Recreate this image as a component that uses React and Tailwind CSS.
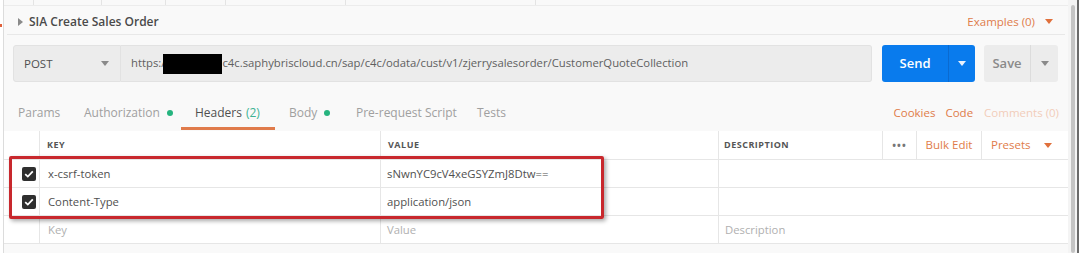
import React from 'react';

const Caret = ({ className = '' }) => (
  <svg width="8" height="5" viewBox="0 0 8 5" className={className}>
    <path d="M0 0 L8 0 L4 5 Z" fill="currentColor" />
  </svg>
);

const Check = () => (
  <span className="flex h-[14px] w-[14px] items-center justify-center rounded-[2px] bg-[#2f2f2f]">
    <svg width="10" height="8" viewBox="0 0 10 8">
      <path d="M1.2 4.2 L3.8 6.6 L8.8 1.4" stroke="#fff" strokeWidth="1.8" fill="none" />
    </svg>
  </span>
);

const tabs = [
  { label: 'Params', w: 'w-[66px]' },
  { label: 'Authorization', w: 'w-[111px]', dot: true },
  { label: 'Headers', w: 'w-[94px]', count: '(2)', active: true },
  { label: 'Body', w: 'w-[67px]', dot: true },
  { label: 'Pre-request Script', w: 'w-[121px]' },
  { label: 'Tests', w: 'w-[60px]' },
];

const rows = [
  { key: 'x-csrf-token', value: 'sNwnYC9cV4xeGSYZmJ8Dtw==' },
  { key: 'Content-Type', value: 'application/json' },
];

export default function App() {
  return (
    <div className="relative flex h-[253px] w-[1080px] overflow-hidden bg-white font-['Open_Sans',sans-serif] text-[11.5px] text-[#505050]">
      <div className="absolute left-0 top-[24px] h-[3px] w-[2px] bg-[#e0603a]" />
      <div className="ml-[3px] flex w-[1065px] flex-col border-l border-[#dcdcdc] bg-[#f9f9f9]">
        {/* top tabs edge */}
        <div className="flex h-[6px] border-b border-[#ececec]">
          <div className="w-[30px] border-r border-[#e4e4e4]" />
          <div className="w-[68px] border-r border-[#e4e4e4]" />
          <div className="w-[64px] border-r border-[#e4e4e4]" />
          <div className="w-[60px] border-r border-[#e4e4e4]" />
          <div className="w-[120px] border-r border-[#e4e4e4]" />
          <div className="w-[190px] border-r border-[#e4e4e4]" />
        </div>

        {/* title row */}
        <div className="mx-[3px] flex h-[29px] items-center border-b border-[#e8e8e8] pl-[11px] pr-[12px] pt-[3px]">
          <svg width="5" height="8" viewBox="0 0 5 8" className="mr-[6px] text-[#8a8a8a]">
            <path d="M0 0 L5 4 L0 8 Z" fill="currentColor" />
          </svg>
          <span className="text-[12px] font-semibold text-[#4a4a4a]">SIA Create Sales Order</span>
          <span className="ml-auto text-[11.5px] text-[#df7c4a]">Examples (0)</span>
          <Caret className="ml-[10px] text-[#e0703c]" />
        </div>

        {/* url row */}
        <div className="mt-[10px] flex h-[37px] pl-[9px]">
          <div className="flex w-[108px] items-center rounded-l-[3px] border border-[#e2e2e2] bg-[#ececec] pl-[10px] pr-[11px]">
            <span className="text-[11.5px] text-[#505050]">POST</span>
            <Caret className="ml-auto text-[#8a8a8a]" />
          </div>
          <div className="flex w-[751px] items-center rounded-r-[3px] border border-l-0 border-[#e2e2e2] bg-[#ececec] pl-[10px] text-[11.3px] text-[#606060]">
            <span>https:/</span>
            <span className="ml-[-2px] inline-block h-[20px] w-[59px] bg-black" />
            <span>c4c.saphybriscloud.cn/sap/c4c/odata/cust/v1/zjerrysalesorder/CustomerQuoteCollection</span>
          </div>
          <div className="ml-[10px] flex w-[93px] rounded-[3px] bg-[#097bed] text-white">
            <span className="flex w-[66px] items-center justify-center text-[13px] font-semibold">Send</span>
            <span className="flex flex-1 items-center justify-center border-l border-[#0a6ad0]">
              <Caret className="text-[#e8f1fd]" />
            </span>
          </div>
          <div className="ml-[9px] flex w-[74px] rounded-[3px] bg-[#ececec] text-[#8a8a8a]">
            <span className="flex w-[46px] items-center justify-center text-[13px] font-semibold">Save</span>
            <span className="flex flex-1 items-center justify-center border-l border-[#dcdcdc]">
              <Caret className="text-[#8a8a8a]" />
            </span>
          </div>
        </div>

        {/* request tabs */}
        <div className="mt-[13px] flex h-[35px] pr-[9px]">
          {tabs.map((t) => (
            <div
              key={t.label}
              className={`flex ${t.w} items-center border-b-[3px] pl-[14px] pt-[4px] text-[12px] ${t.active ? 'border-[#e07b4b] text-[#505050]' : 'border-transparent text-[#a0a0a0]'}`}
            >
              <span>{t.label}</span>
              {t.count && <span className="ml-[4px] text-[#3db394]">{t.count}</span>}
              {t.dot && <span className="ml-[7px] h-[6px] w-[6px] rounded-full bg-[#26b47f]" />}
            </div>
          ))}
          <div className="ml-auto flex items-center pt-[4px] pb-[3px]">
            <span className="text-[#df7c4a]">Cookies</span>
            <span className="ml-[10px] text-[#df7c4a]">Code</span>
            <span className="ml-[11px] text-[#f2cdb9]">Comments (0)</span>
          </div>
        </div>

        {/* headers table */}
        <div className="mt-[1px] flex flex-col bg-white">
          <div className="flex h-[29px] border-b border-[#e6e6e6] text-[9px] font-bold tracking-[0.5px] text-[#555]">
            <div className="w-[36px] border-r border-[#e6e6e6]" />
            <div className="flex w-[341px] items-center border-r border-[#e6e6e6] pl-[7px]">KEY</div>
            <div className="flex w-[338px] items-center border-r border-[#e6e6e6] pl-[7px]">VALUE</div>
            <div className="flex w-[164px] items-center border-r border-[#e6e6e6] pl-[5px]">DESCRIPTION</div>
            <div className="flex w-[34px] items-center justify-center border-r border-[#e6e6e6] text-[10px] tracking-[1px] text-[#777]">•••</div>
            <div className="flex w-[65px] items-center justify-center border-r border-[#e6e6e6] text-[11.5px] font-normal tracking-normal text-[#df7c4a]">Bulk Edit</div>
            <div className="flex flex-1 items-center pl-[9px] text-[11.5px] font-normal tracking-normal text-[#df7c4a]">
              Presets
              <Caret className="ml-[13px] text-[#e0703c]" />
            </div>
          </div>
          {rows.map((r) => (
            <div key={r.key} className="flex h-[28px] border-b border-[#e6e6e6] text-[11.3px] text-[#505050]">
              <div className="flex w-[36px] items-center justify-end border-r border-[#e6e6e6] pr-[3px]">
                <Check />
              </div>
              <div className="flex w-[341px] items-center border-r border-[#e6e6e6] pl-[8px] pt-[1px]">{r.key}</div>
              <div className="flex w-[338px] items-center border-r border-[#e6e6e6] pl-[6px] pt-[1px]">{r.value}</div>
              <div className="flex-1" />
            </div>
          ))}
          <div className="flex h-[28px] border-b border-[#e6e6e6] text-[11.3px] text-[#b0b0b0]">
            <div className="w-[36px] border-r border-[#e6e6e6]" />
            <div className="flex w-[341px] items-center border-r border-[#e6e6e6] pl-[8px] pt-[1px]">Key</div>
            <div className="flex w-[338px] items-center border-r border-[#e6e6e6] pl-[6px] pt-[1px]">Value</div>
            <div className="flex flex-1 items-center pl-[6px] pt-[1px]">Description</div>
          </div>
        </div>
        <div className="flex-1 bg-[#f9f9f9]" />
      </div>

      {/* scrollbar */}
      <div className="flex w-[12px] bg-[#f4f4f4]">
        <div className="ml-[3px] mt-[5px] w-[4px] rounded-[2px] bg-[#c4c4c4]" />
        <div className="ml-[2px] w-[2px] bg-[#6a6a6a]" />
        <div className="flex-1 bg-white" />
      </div>

      {/* annotation box */}
      <div className="pointer-events-none absolute left-[9px] top-[156px] h-[63px] w-[595px] rounded-[2px] border-[3px] border-[#c8282d] shadow-[2px_2px_4px_rgba(0,0,0,0.35)]" />
    </div>
  );
}
